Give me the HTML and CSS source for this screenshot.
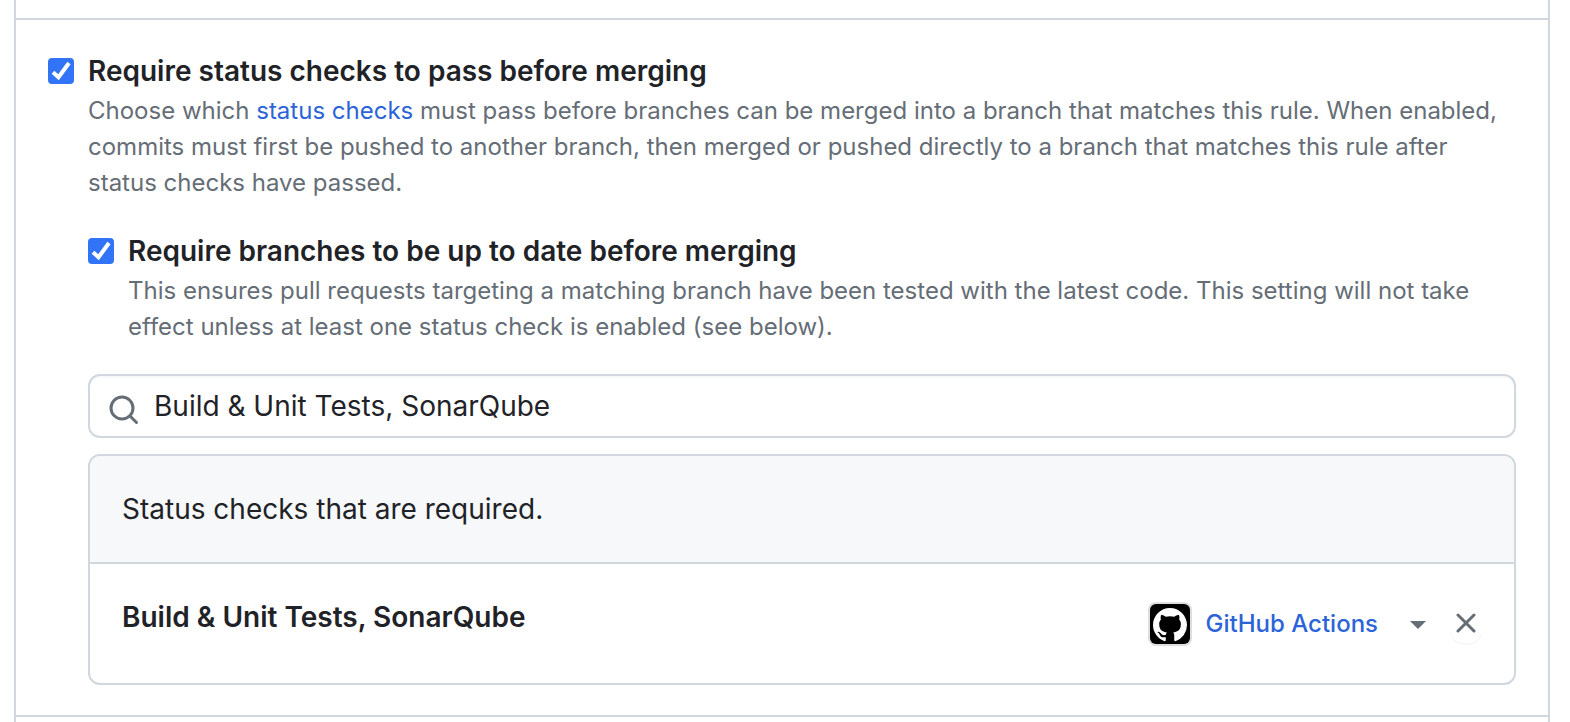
FILE: index.html
```html
<!DOCTYPE html>
<html lang="en">
<head>
<meta charset="utf-8">
<meta name="viewport" content="width=device-width, initial-scale=1">
<title>Branch protection rule</title>
<link rel="stylesheet" href="styles.css">
</head>
<body>
<main class="rules">
  <section class="rule">
    <div class="option">
      <span class="check">
        <input class="check-input" type="checkbox" id="require-checks" aria-describedby="require-checks-note" checked>
        <svg class="check-mark" viewBox="0 0 26 26" aria-hidden="true"><path d="M5 14.2 10.5 19.2 21 5" /></svg>
      </span>
      <div class="option-body">
        <label class="option-title" for="require-checks">Require status checks to pass before merging</label>
        <p class="note" id="require-checks-note">Choose which <a class="link" href="#status-checks">status checks</a> must pass before branches can be merged into a branch that matches this rule. When enabled, commits must first be pushed to another branch, then merged or pushed directly to a branch that matches this rule after status checks have passed.</p>
      </div>
    </div>

    <div class="nested">
      <div class="option">
        <span class="check">
          <input class="check-input" type="checkbox" id="require-current" aria-describedby="require-current-note" checked>
          <svg class="check-mark" viewBox="0 0 26 26" aria-hidden="true"><path d="M5 14.2 10.5 19.2 21 5" /></svg>
        </span>
        <div class="option-body">
          <label class="option-title" for="require-current">Require branches to be up to date before merging</label>
          <p class="note" id="require-current-note">This ensures pull requests targeting a matching branch have been tested with the latest code. This setting will not take effect unless at least one status check is enabled (see below).</p>
        </div>
      </div>

      <div class="checks" id="status-checks">
        <div class="search">
          <svg class="search-icon" viewBox="0 0 32 32" aria-hidden="true"><circle cx="14" cy="14" r="11" /><path d="M22 22 28.500 28.500" /></svg>
          <input class="search-input" type="text" aria-label="Search for status checks" value="Build &amp; Unit Tests, SonarQube">
        </div>
        <div class="box">
          <div class="box-header">Status checks that are required.</div>
          <div class="box-row">
            <strong class="check-name">Build &amp; Unit Tests, SonarQube</strong>
            <div class="row-actions">
              <button class="source" type="button">
                <svg class="avatar" viewBox="0 0 44 44" aria-hidden="true">
                  <rect class="avatar-edge" width="44" height="44" rx="8" />
                  <rect x="2" y="2" width="40" height="40" rx="6" />
                  <svg x="5" y="6" width="34" height="34" viewBox="0 0 16 16"><path class="avatar-mark" d="M8 0C3.580 0 0 3.580 0 8c0 3.540 2.290 6.530 5.470 7.590.4.070.55-.17.55-.38 0-.19-.01-.82-.01-1.490-2.010.37-2.530-.49-2.690-.94-.09-.23-.48-.94-.82-1.130-.28-.15-.68-.52-.01-.53.63-.01 1.080.58 1.230.82.72 1.210 1.870.87 2.330.66.070-.52.28-.87.51-1.070-1.780-.2-3.640-.89-3.640-3.950 0-.87.31-1.590.82-2.150-.08-.2-.36-1.020.08-2.120 0 0 .67-.21 2.200.82.64-.18 1.320-.27 2-.27s1.360.09 2 .27c1.530-1.040 2.200-.82 2.200-.82.44 1.100.16 1.920.08 2.120.51.56.82 1.270.82 2.150 0 3.070-1.870 3.750-3.650 3.950.29.25.54.73.54 1.480 0 1.070-.01 1.930-.01 2.200 0 .21.15.46.55.38A8.010 8.010 0 0 0 16 8c0-4.420-3.580-8-8-8Z" /></svg>
                </svg>
                <span>GitHub Actions</span>
                <svg class="caret" viewBox="0 0 16 8" aria-hidden="true"><path d="M0 0h16L8 8Z" /></svg>
              </button>
              <button class="remove" type="button" aria-label="Remove status check">
                <svg class="remove-icon" viewBox="0 0 20 20" aria-hidden="true"><path d="M2 2 18 18M18 2 2 18" /></svg>
              </button>
            </div>
          </div>
        </div>
      </div>
    </div>
  </section>
</main>
</body>
</html>
```
FILE: styles.css
```css
* {
  box-sizing: border-box;
}

body {
  margin: 0;
  background: #fff;
  color: #1f2328;
  font-family: Inter, "Liberation Sans", sans-serif;
  font-size: 28px;
  line-height: 42px;
}

button,
input {
  margin: 0;
  font: inherit;
  color: inherit;
}

.rules {
  min-height: 100vh;
  margin: 0 20px 0 14px;
  padding-top: 18px;
  border: solid #d0d7de;
  border-width: 0 2px;
}

.rule {
  padding: 30px 32px;
  border: solid #d0d7de;
  border-width: 2px 0;
}

.option {
  display: flex;
  gap: 14px;
}

.option-body {
  flex: 1;
}

.check {
  display: grid;
  flex: none;
  width: 26px;
  height: 42px;
  align-items: center;
}

.check-input,
.check-mark {
  grid-area: 1 / 1;
  width: 26px;
  height: 26px;
}

.check-input {
  appearance: none;
  border: 2px solid #767676;
  border-radius: 4px;
}

.check-input:checked {
  border-color: #3174f8;
  background: #3174f8;
}

.check-mark {
  fill: none;
  stroke: #fff;
  stroke-width: 4;
  pointer-events: none;
}

.check-input:not(:checked) + .check-mark {
  visibility: hidden;
}

.option-title {
  display: block;
  font-weight: 600;
}

.note {
  margin: 1px 0 0;
  color: #656d76;
  font-size: 24px;
  line-height: 36px;
}

.link {
  color: #2b64d8;
  text-decoration: none;
}

.nested {
  margin: 29px 0 0 40px;
}

.checks {
  display: flex;
  flex-direction: column;
  gap: 16px;
  margin-top: 29px;
}

.search {
  display: flex;
  align-items: center;
  gap: 14px;
  height: 64px;
  padding: 0 18px;
  border: 2px solid #d0d7de;
  border-radius: 12px;
  box-shadow: inset 0 2px 0 #f6f8fa;
}

.search-icon {
  flex: none;
  width: 32px;
  height: 32px;
  margin-top: 8px;
  fill: none;
  stroke: #656d76;
  stroke-width: 3;
  stroke-linecap: round;
}

.search-input {
  flex: 1;
  min-width: 0;
  padding: 0;
  border: 0;
  outline: 0;
  background: none;
}

.box {
  overflow: hidden;
  border: 2px solid #d0d7de;
  border-radius: 12px;
}

.box-header {
  padding: 32px;
  border-bottom: 2px solid #d0d7de;
  background: #f6f8fa;
}

.box-row {
  display: flex;
  justify-content: space-between;
  padding: 32px 32px 37px;
}

.check-name {
  font-weight: 600;
}

.row-actions {
  display: flex;
  align-items: center;
  gap: 24px;
}

.source {
  display: flex;
  align-items: center;
  gap: 14px;
  padding: 6px 0 0;
  border: 0;
  background: none;
  color: #2b64d8;
  font-size: 24px;
  font-weight: 500;
  line-height: 36px;
}

.avatar {
  width: 44px;
  height: 44px;
}

.avatar-edge {
  fill: #dedede;
}

.avatar-mark {
  fill: #fff;
}

.caret {
  width: 16px;
  height: 8px;
  margin: 2px 0 0 18px;
  fill: #656d76;
}

.remove {
  display: grid;
  width: 32px;
  height: 40px;
  margin-top: 4px;
  padding: 0;
  place-items: center;
  border: 0;
  border-radius: 14px;
  background: #fff;
  box-shadow: 0 2px 0 #f6f7f8;
}

.remove-icon {
  width: 20px;
  height: 20px;
  fill: none;
  stroke: #656d76;
  stroke-width: 3;
  stroke-linecap: round;
}
```
